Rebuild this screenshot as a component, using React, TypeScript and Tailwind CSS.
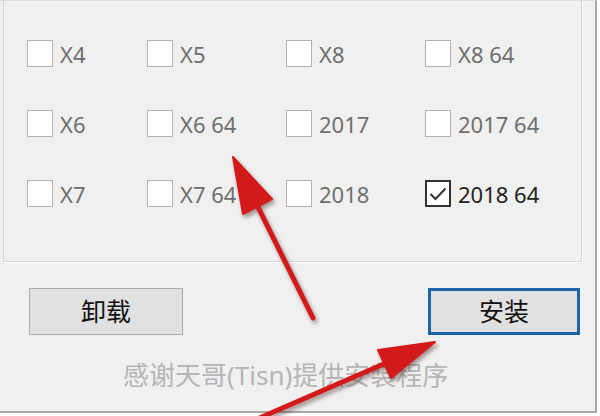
const rows = [
  [
    { label: "X4" },
    { label: "X5" },
    { label: "X8" },
    { label: "X8 64" },
  ],
  [
    { label: "X6" },
    { label: "X6 64" },
    { label: "2017" },
    { label: "2017 64" },
  ],
  [
    { label: "X7" },
    { label: "X7 64" },
    { label: "2018" },
    { label: "2018 64", checked: true },
  ],
];

const Check = ({ label, checked }: { label: string; checked?: boolean }) => (
  <div className="flex items-center gap-[7px]">
    {checked ? (
      <div className="w-[26px] h-[27px] border-2 border-[#333] bg-white flex items-center justify-center">
        <svg width="18" height="14" viewBox="0 0 18 14" fill="none">
          <path d="M1.5 7 L6.5 12 L16.5 1.5" stroke="#333" strokeWidth="2" />
        </svg>
      </div>
    ) : (
      <div className="w-[26px] h-[27px] border-[1.5px] border-[#b3b3b3] bg-white" />
    )}
    <span
      className={
        "text-[22px] leading-none " +
        (checked ? "text-[#222]" : "text-[#6e6e6e]")
      }
    >
      {label}
    </span>
  </div>
);

const Arrows = () => (
  <svg
    className="absolute inset-0 pointer-events-none"
    width="600"
    height="416"
    viewBox="0 0 600 416"
    style={{ filter: "drop-shadow(2px 3px 2px rgba(60,20,20,0.45))" }}
  >
    <g fill="#d31a1a" stroke="#d31a1a" strokeLinecap="round" strokeLinejoin="round">
      <line x1="313" y1="318" x2="257" y2="205" strokeWidth="5" />
      <polygon points="233,157 272,199 243,214" strokeWidth="2" />
      <line x1="255" y1="420" x2="386" y2="363" strokeWidth="5" />
      <polygon points="435,342 391,378 378,350" strokeWidth="2" />
    </g>
  </svg>
);

export default function App() {
  return (
    <div
      className="relative w-[600px] h-[416px] bg-white overflow-hidden"
      style={{ fontFamily: '"Noto Sans", "Noto Sans CJK SC", sans-serif' }}
    >
      <div className="w-[597px] h-[413px] bg-[#f0f0f0] border-r-2 border-b-2 border-[#a8a8a8] border-t border-t-[#dcdcdc] pl-[3px]">
        <div className="w-[579px] h-[261px] border-l border-r border-b border-[#d4d4d4] shadow-[1px_1px_0_#ffffff] pl-[23px] pt-[39px]">
          <div className="grid grid-cols-[120px_139px_139px_1fr] gap-y-[43px]">
            {rows.flat().map((c) => (
              <Check key={c.label} label={c.label} checked={c.checked} />
            ))}
          </div>
        </div>

        <div className="flex justify-between pl-[26px] pr-[15px] mt-[26px]">
          <button className="w-[154px] h-[47px] bg-[#e1e1e1] border-[1.5px] border-[#adadad] text-[25px] text-[#111] leading-none">
            卸载
          </button>
          <button className="w-[152px] h-[47px] bg-[#e1e1e1] border-[3px] border-[#1d63a8] text-[25px] text-[#111] leading-none">
            安装
          </button>
        </div>

        <div className="mt-[27px] pl-[120px] text-[26px] leading-none text-[#b5b5b5]">
          感谢天哥(Tisn)提供安装程序
        </div>
      </div>
      <Arrows />
    </div>
  );
}
